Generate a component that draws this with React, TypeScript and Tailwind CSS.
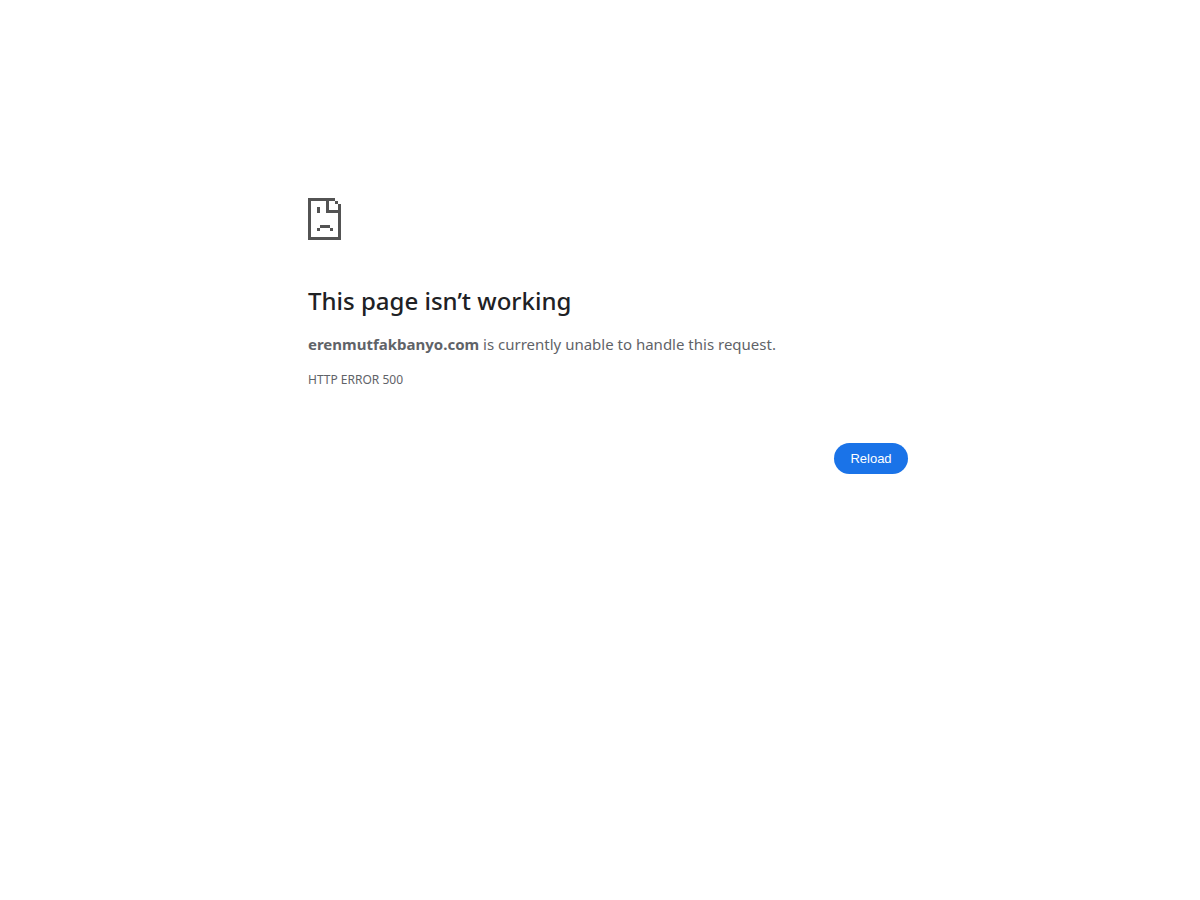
function SadPageIcon() {
  return (
    <svg
      className="block h-[42px] w-[33px] text-[#535353]"
      viewBox="0 0 33 42"
      fill="currentColor"
      shapeRendering="crispEdges"
      aria-hidden="true"
    >
      {/* page outline with the folded corner */}
      <path d="M0 0h27v3h-6v9h12v30H0z M3 3v36h27V15H18V3z" fillRule="evenodd" />
      <path d="M27 3h3v3h-3z M30 6h3v9h-3z" />
      {/* face */}
      <path d="M9 9h3v6H9z M12 27h10v3H12z M9 30h3v3H9z M22 30h3v3h-3z" />
    </svg>
  );
}

export default function App() {
  return (
    <div className="min-h-screen bg-white pl-4 font-['Noto_Sans',sans-serif] text-[15px] leading-6 text-[#5f6368]">
      <main className="mx-auto max-w-[600px] pt-[198px]">
        <SadPageIcon />

        <h1 className="mt-11 text-2xl leading-[34px] font-medium text-[#202124]">
          This page isn’t working
        </h1>
        <p className="mt-3.5">
          <strong className="font-bold">erenmutfakbanyo.com</strong> is currently unable to handle this request.
        </p>
        <p className="mt-3.5 text-xs leading-5">HTTP ERROR 500</p>

        <div className="mt-[53px] flex justify-end">
          <button
            type="button"
            onClick={() => window.location.reload()}
            className="min-w-[74px] cursor-pointer rounded-full bg-[#1a73e8] px-4 py-2 font-['Liberation_Sans',sans-serif] text-[13px] leading-[15px] text-white"
          >
            Reload
          </button>
        </div>
      </main>
    </div>
  );
}
